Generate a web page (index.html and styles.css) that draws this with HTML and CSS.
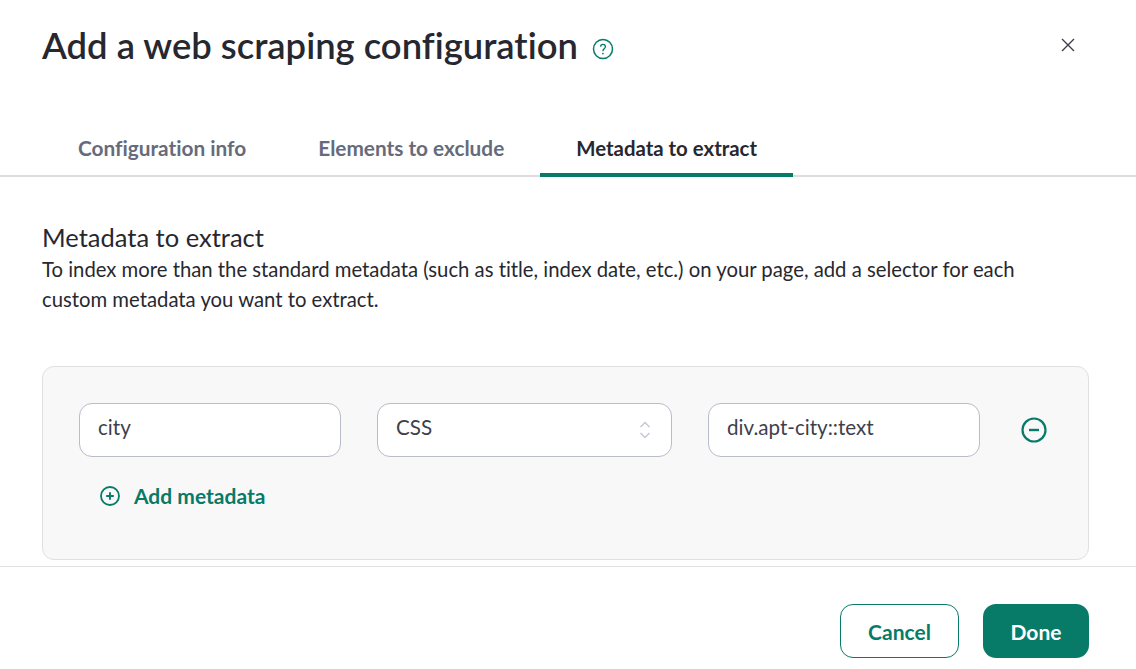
FILE: index.html
```html
<!DOCTYPE html>
<html lang="en">
<head>
    <title>Add a web scraping configuration</title>
    <meta charset="UTF-8">
    <link rel="stylesheet" href="styles.css">
</head>
<body>
    <div class="modal">
        <div class="entete">
            <h1 class="titre">Add a web scraping configuration</h1>
            <svg class="aide" width="22" height="22" viewBox="0 0 22 22" fill="none" stroke="#087a68">
                <circle cx="11" cy="11" r="9.5" stroke-width="1.5"/>
                <path d="M8.6 8.8c0-1.5 1-2.4 2.4-2.4s2.4.9 2.4 2.3c0 1.1-.6 1.6-1.3 2.2-.7.5-1.1 1-1.1 1.9v.4" stroke-width="1.3"/>
                <circle cx="10.9" cy="15.6" r=".9" fill="#087a68" stroke="none"/>
            </svg>
            <svg class="fermer" width="14" height="14" viewBox="0 0 14 14" stroke="#3d3f4c" stroke-width="1.4">
                <path d="M1 1l12 12M13 1L1 13"/>
            </svg>
        </div>

        <div class="onglets">
            <div class="onglet">Configuration info</div>
            <div class="onglet">Elements to exclude</div>
            <div class="onglet actif">Metadata to extract</div>
        </div>

        <div class="contenu">
            <h2 class="sous-titre">Metadata to extract</h2>
            <p class="description">To index more than the standard metadata (such as title, index date, etc.) on your page, add a selector for each custom metadata you want to extract.</p>

            <div class="panneau">
                <div class="ligne">
                    <div class="champ nom">city</div>
                    <div class="champ selecteur">CSS
                        <svg width="12" height="20" viewBox="0 0 12 20" fill="none" stroke="#c6c8d3" stroke-width="1.5">
                            <path d="M1.5 7L6 2.5 10.5 7M1.5 13L6 17.5 10.5 13"/>
                        </svg>
                    </div>
                    <div class="champ valeur">div.apt-city::text</div>
                    <svg class="retirer" width="26" height="26" viewBox="0 0 26 26" fill="none" stroke="#087a68">
                        <circle cx="13" cy="13" r="11.5" stroke-width="2.2"/>
                        <path d="M8 13h10" stroke-width="2.4"/>
                    </svg>
                </div>
                <div class="ajouter">
                    <svg width="20" height="20" viewBox="0 0 20 20" fill="none" stroke="#087a68">
                        <circle cx="10" cy="10" r="9" stroke-width="1.8"/>
                        <path d="M6.2 10h7.6M10 6.2v7.6" stroke-width="1.9"/>
                    </svg>
                    Add metadata
                </div>
            </div>
        </div>

        <div class="pied">
            <div class="bouton annuler">Cancel</div>
            <div class="bouton valider">Done</div>
        </div>
    </div>
</body>
</html>
```

FILE: styles.css
```css
html, body {
    margin: 0;
    height: 100%;
}
body {
    font-family: "Lato", sans-serif;
    font-variant-ligatures: none;
    color: #27282f;
    background-color: #fff;
    overflow: hidden;
}

.modal {
    display: flex;
    flex-direction: column;
    height: 669px;
}

/****** ENTETE ******/
.entete {
    display: flex;
    align-items: center;
    height: 94px;
    padding: 0 61px 0 42px;
}
.titre {
    margin: -4px 0 0;
    font-size: 36.4px;
    font-weight: 600;
    line-height: 44px;
}
.aide {
    margin-left: 14px;
    margin-top: 3px;
}
.fermer {
    margin-left: auto;
    margin-top: -4px;
}

/****** ONGLETS ******/
.onglets {
    display: flex;
    padding-left: 42px;
    margin-top: 26px;
    border-bottom: 2px solid #dcdde1;
}
.onglet {
    padding: 0 36px;
    height: 55px;
    line-height: 55px;
    font-size: 20.8px;
    font-weight: 700;
    color: #666b7c;
}
.onglet.actif {
    color: #27282f;
    box-shadow: inset 0 -4px 0 #087a68;
    margin-bottom: -2px;
    height: 57px;
    line-height: 57px;
    font-size: 20.4px;
}

/****** CONTENU ******/
.contenu {
    flex: 1;
    padding: 44px 47px 0 42px;
    overflow: hidden;
}
.sous-titre {
    margin: 0;
    font-size: 25.5px;
    font-weight: 400;
    line-height: 32px;
}
.description {
    margin: 1px 0 0;
    max-width: 1000px;
    font-size: 20.3px;
    line-height: 30px;
}
.panneau {
    box-sizing: border-box;
    margin-top: 52px;
    height: 194px;
    padding: 36px 36px 0;
    background-color: #f8f8f9;
    border: 1px solid #dfe0e4;
    border-radius: 12px;
}
.ligne {
    display: flex;
    align-items: center;
    column-gap: 36px;
}
.champ {
    display: flex;
    align-items: center;
    justify-content: space-between;
    box-sizing: border-box;
    height: 54px;
    padding: 0 20px 6px 18px;
    font-size: 20.6px;
    color: #3d3f4c;
    background-color: #fff;
    border: 1px solid #b9bcc9;
    border-radius: 13px;
}
.nom { width: 262px; }
.selecteur { width: 295px; }
.valeur { width: 272px; }
.selecteur svg {
    margin-top: 6px;
}
.retirer {
    margin-left: 5px;
}
.ajouter {
    display: flex;
    align-items: center;
    column-gap: 14px;
    margin: 26px 0 0 21px;
    font-size: 21px;
    font-weight: 700;
    color: #087a68;
}

/****** PIED ******/
.pied {
    display: flex;
    justify-content: flex-end;
    column-gap: 24px;
    height: 103px;
    box-sizing: border-box;
    padding: 37px 47px 0 0;
    border-top: 1px solid #dfe0e4;
}
.bouton {
    box-sizing: border-box;
    height: 54px;
    line-height: 56px;
    font-size: 21px;
    font-weight: 700;
    text-align: center;
    border-radius: 13px;
}
.annuler {
    width: 119px;
    line-height: 54px;
    color: #087a68;
    border: 1px solid #087a68;
}
.valider {
    width: 106px;
    color: #fff;
    background-color: #087a68;
}
```
